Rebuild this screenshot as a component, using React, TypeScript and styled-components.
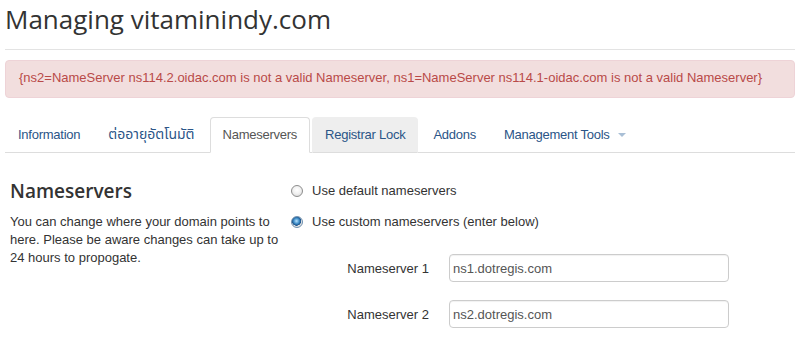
import React from "react";
import styled, { createGlobalStyle } from "styled-components";

const Global = createGlobalStyle`
  html, body { margin: 0; padding: 0; background: #fff; }
  body { font-family: "Liberation Sans", Arial, sans-serif; font-size: 13px; color: #333; }
  * { box-sizing: border-box; }
`;

const Page = styled.div`
  padding-left: 5px;
  width: 795px;
  overflow: hidden;
`;

const Title = styled.h1`
  margin: 3px 0 0;
  padding: 0 0 14px;
  font-family: "Open Sans", sans-serif;
  font-weight: 400;
  font-size: 26px;
  line-height: 32px;
  color: #333;
  border-bottom: 1px solid #e3e3e3;
`;

const Alert = styled.div`
  margin-top: 10px;
  padding: 8px 13px 10px;
  line-height: 18px;
  font-size: 13px;
  color: #b94a48;
  background: #f2dede;
  border: 1px solid #eed3d7;
  border-radius: 4px;
  white-space: nowrap;
`;

const Tabs = styled.ul`
  display: flex;
  list-style: none;
  margin: 19px 0 0;
  padding: 0;
  border-bottom: 1px solid #ddd;
`;

const TabItem = styled.li`
  margin: 0 2px -1px 0;
`;

const TabLink = styled.a<{ $active?: boolean; $hover?: boolean }>`
  display: flex;
  align-items: center;
  padding: 9px 12px 10px;
  line-height: 15px;
  font-size: 13px;
  letter-spacing: -0.25px;
  text-decoration: none;
  border: 1px solid transparent;
  border-radius: 4px 4px 0 0;
  color: ${(p) => (p.$active ? "#555" : "#2b5587")};
  background: ${(p) => (p.$active ? "#fff" : p.$hover ? "#eee" : "transparent")};
  ${(p) => p.$active && "border-color: #ddd #ddd transparent;"}
  ${(p) => p.$hover && "border-color: #eee #eee #ddd;"}
  cursor: pointer;
`;

const Thai = styled.span`
  font-family: Tahoma, "Noto Sans Thai", "Loma", "Garuda", "Norasi", "DejaVu Sans", sans-serif;
  font-size: 14px;
  letter-spacing: 0;
`;

const Caret = styled.span`
  display: inline-block;
  width: 0;
  height: 0;
  margin-left: 8px;
  border-top: 4px solid #a9bfd6;
  border-left: 4px solid transparent;
  border-right: 4px solid transparent;
`;

const Content = styled.div`
  display: grid;
  grid-template-columns: 283px 1fr;
  align-items: start;
`;

const Intro = styled.div`
  padding-left: 5px;
  margin-top: 26px;
`;

const SectionTitle = styled.h3`
  margin: 0;
  font-family: "Open Sans", sans-serif;
  font-weight: 600;
  font-size: 19px;
  line-height: 24px;
  color: #333;
`;

const Description = styled.p`
  margin: 10px 0 0;
  font-size: 13px;
  line-height: 18px;
  color: #333;
`;

const Form = styled.div`
  padding-top: 29px;
  display: flex;
  flex-direction: column;
`;

const RadioRow = styled.label<{ $gap?: number }>`
  display: flex;
  align-items: center;
  height: 18px;
  margin-top: ${(p) => p.$gap ?? 0}px;
  line-height: 18px;
  font-size: 13px;
  color: #333;
`;

const Radio = styled.input`
  appearance: none;
  -webkit-appearance: none;
  width: 12px;
  height: 12px;
  margin: 0 9px 0 3px;
  border-radius: 50%;
  border: 1px solid #8d8d8d;
  background: radial-gradient(circle at 50% 40%, #ffffff 0%, #f2f2f2 45%, #d4d4d4 100%);
  &:checked {
    border-color: #6e8fae;
    background:
      radial-gradient(circle at 45% 40%, #b9e3ff 0%, #3d8cc7 35%, #1b4f86 55%, transparent 60%),
      radial-gradient(circle, #f2f2f2 0%, #d9d9d9 100%);
  }
`;

const FieldRow = styled.div<{ $gap: number }>`
  display: flex;
  align-items: center;
  margin-top: ${(p) => p.$gap}px;
`;

const FieldLabel = styled.label`
  width: 141px;
  margin-right: 20px;
  text-align: right;
  font-size: 13px;
  color: #333;
`;

const TextInput = styled.input`
  width: 280px;
  height: 28px;
  padding: 0 3px;
  font-family: "Liberation Sans", Arial, sans-serif;
  font-size: 13px;
  color: #555;
  border: 1px solid #ccc;
  border-radius: 4px;
  box-shadow: inset 0 1px 1px rgba(0, 0, 0, 0.06);
  outline: none;
`;

export default function App() {
  return (
    <Page>
      <Global />
      <Title>Managing vitaminindy.com</Title>
      <Alert>
        {"{ns2=NameServer ns114.2.oidac.com is not a valid Nameserver, ns1=NameServer ns114.1-oidac.com is not a valid Nameserver}"}
      </Alert>
      <Tabs>
        <TabItem><TabLink>Information</TabLink></TabItem>
        <TabItem><TabLink><Thai>ต่ออายุอัตโนมัติ</Thai></TabLink></TabItem>
        <TabItem><TabLink $active>Nameservers</TabLink></TabItem>
        <TabItem><TabLink $hover>Registrar Lock</TabLink></TabItem>
        <TabItem><TabLink>Addons</TabLink></TabItem>
        <TabItem><TabLink>Management Tools<Caret /></TabLink></TabItem>
      </Tabs>
      <Content>
        <Intro>
          <SectionTitle>Nameservers</SectionTitle>
          <Description>
            You can change where your domain points to here. Please be aware changes can take up to 24 hours to propogate.
          </Description>
        </Intro>
        <Form>
          <RadioRow>
            <Radio type="radio" name="ns" />
            Use default nameservers
          </RadioRow>
          <RadioRow $gap={13}>
            <Radio type="radio" name="ns" defaultChecked />
            Use custom nameservers (enter below)
          </RadioRow>
          <FieldRow $gap={23}>
            <FieldLabel>Nameserver 1</FieldLabel>
            <TextInput defaultValue="ns1.dotregis.com" />
          </FieldRow>
          <FieldRow $gap={18}>
            <FieldLabel>Nameserver 2</FieldLabel>
            <TextInput defaultValue="ns2.dotregis.com" />
          </FieldRow>
        </Form>
      </Content>
    </Page>
  );
}
